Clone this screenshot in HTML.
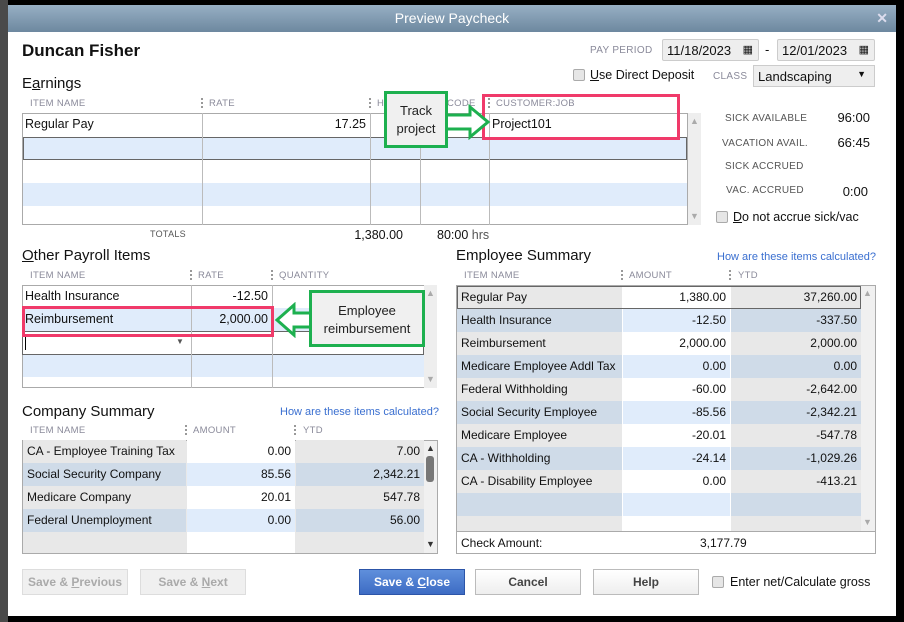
<!DOCTYPE html>
<html><head><meta charset="utf-8"><style>
*{box-sizing:border-box;margin:0;padding:0}
body{width:904px;height:622px;background:#000;position:relative;overflow:hidden;font-family:"Liberation Sans",Arial,sans-serif;font-size:12px;color:#111}
.a{position:absolute}
#win{position:absolute;left:8px;top:5px;width:888px;height:611px;background:#fff}
#tb{position:absolute;left:8px;top:5px;width:888px;height:27px;background:linear-gradient(#97afc4,#6d889f);color:#fff;font-size:14px;text-align:center;line-height:27px}
.hd{position:absolute;font-size:9.5px;color:#8a8a9a;letter-spacing:.3px}
.sep{position:absolute;width:2px;height:10px;border-left:2px dotted #999}
.box{position:absolute;border:1px solid #aaa;background:#fff}
.r{position:absolute;text-align:right}
.t{position:absolute;white-space:nowrap}
.cb{position:absolute;width:12px;height:12px;border:1px solid #aaa;background:#e6e6e6;border-radius:2px}
.btn{position:absolute;height:26px;border:1px solid #bbb;background:linear-gradient(#fff,#eee);text-align:center;line-height:24px;font-size:12px;font-weight:bold;color:#444}
.dis{color:#aaa;background:#f0f0f0;border-color:#ddd}
.sb{position:absolute;background:#eee}
.lnk{position:absolute;color:#3a6fd0;font-size:11px}
.cell{position:absolute;height:23px;line-height:23px;padding:0 4px;overflow:hidden;white-space:nowrap}
</style></head><body>
<div class="a" style="left:0;top:0;width:8px;height:622px;background:#4a4a4a"></div>
<div id="win"></div>
<div id="tb">Preview Paycheck<span class="a" style="right:8px;top:0;font-size:14px;font-weight:bold;color:#dde">✕</span></div>

<div class="t" style="left:22px;top:41px;font-size:17px;font-weight:bold">Duncan Fisher</div>
<div class="hd" style="left:590px;top:45px;font-size:10px">PAY PERIOD</div>
<div class="a" style="left:662px;top:39px;width:97px;height:22px;border:1px solid #ccc;background:#eee;border-radius:2px;padding:3px 4px;font-size:13px">11/18/2023<span class="a" style="right:5px;top:3px;font-size:11px">▦</span></div>
<div class="t" style="left:765px;top:42px;font-size:13px">-</div>
<div class="a" style="left:777px;top:39px;width:98px;height:22px;border:1px solid #ccc;background:#eee;border-radius:2px;padding:3px 4px;font-size:13px">12/01/2023<span class="a" style="right:5px;top:3px;font-size:11px">▦</span></div>
<div class="cb" style="left:573px;top:69px"></div>
<div class="t" style="left:590px;top:68px;font-size:12.5px"><u>U</u>se Direct Deposit</div>
<div class="hd" style="left:713px;top:71px;font-size:10px">CLASS</div>
<div class="a" style="left:753px;top:65px;width:122px;height:22px;border:1px solid #ccc;background:#eee;padding:3px 4px;font-size:13px">Landscaping<span class="a" style="right:8px;top:3px;font-size:9px">▼</span></div>

<div class="t" style="left:22px;top:75px;font-size:15px">E<u>a</u>rnings</div>
<div class="hd" style="left:30px;top:98px">ITEM NAME</div>
<div class="sep" style="left:201px;top:98px"></div><div class="hd" style="left:209px;top:98px">RATE</div>
<div class="sep" style="left:369px;top:98px"></div><div class="hd" style="left:377px;top:98px">H</div>
<div class="hd" style="left:447px;top:98px">CODE</div>
<div class="sep" style="left:488px;top:98px"></div><div class="hd" style="left:496px;top:98px">CUSTOMER:JOB</div>
<div class="box" style="left:22px;top:113px;width:666px;height:112px"></div>
<div class="a" style="left:23px;top:137px;width:664px;height:23px;background:#e0ecfb;border:1px solid #666"></div>
<div class="a" style="left:23px;top:183px;width:664px;height:23px;background:#e0ecfb"></div>
<div class="a" style="left:202px;top:113px;width:1px;height:112px;background:#bbb"></div>
<div class="a" style="left:370px;top:113px;width:1px;height:112px;background:#bbb"></div>
<div class="a" style="left:420px;top:113px;width:1px;height:112px;background:#bbb"></div>
<div class="a" style="left:489px;top:113px;width:1px;height:112px;background:#bbb"></div>
<div class="sb" style="left:688px;top:113px;width:13px;height:112px"></div>
<div class="t" style="left:690px;top:116px;font-size:9px;color:#aaa">▲</div>
<div class="t" style="left:690px;top:211px;font-size:9px;color:#aaa">▼</div>
<div class="t" style="left:25px;top:117px;font-size:12.5px">Regular Pay</div>
<div class="r" style="left:300px;width:66px;top:117px;font-size:12.5px">17.25</div>
<div class="t" style="left:492px;top:117px;font-size:12.5px">Project101</div>
<div class="a" style="left:482px;top:94px;width:198px;height:46px;border:3px solid #f03a6a"></div>
<svg class="a" style="left:440px;top:104px" width="52" height="36"><path d="M2 11 H30 V3 L48 18 L30 33 V25 H2 Z" fill="#fff" stroke="#1db04f" stroke-width="3"/></svg>
<div class="a" style="left:384px;top:91px;width:64px;height:57px;border:3px solid #1db04f;background:#f0f0f0;text-align:center;font-size:13px;line-height:18px;padding-top:8px;color:#222">Track<br>project</div>
<div class="hd" style="left:150px;top:229px;font-size:9px;color:#555">TOTALS</div>
<div class="r" style="left:320px;width:83px;top:228px;font-size:12.5px">1,380.00</div>
<div class="t" style="left:437px;top:228px;font-size:12.5px">80:00 <span style="color:#555">hrs</span></div>

<div class="hd" style="left:725px;top:113px;font-size:10px;color:#555">SICK AVAILABLE</div><div class="r" style="left:820px;width:50px;top:110px;font-size:13px">96:00</div>
<div class="hd" style="left:722px;top:138px;font-size:10px;color:#555">VACATION AVAIL.</div><div class="r" style="left:820px;width:50px;top:135px;font-size:13px">66:45</div>
<div class="hd" style="left:725px;top:161px;font-size:10px;color:#555">SICK ACCRUED</div>
<div class="hd" style="left:726px;top:185px;font-size:10px;color:#555">VAC. ACCRUED</div><div class="r" style="left:820px;width:48px;top:184px;font-size:13px">0:00</div>
<div class="cb" style="left:716px;top:211px"></div>
<div class="t" style="left:733px;top:210px;font-size:12.5px"><u>D</u>o not accrue sick/vac</div>

<div class="t" style="left:22px;top:247px;font-size:15px"><u>O</u>ther Payroll Items</div>
<div class="hd" style="left:30px;top:270px">ITEM NAME</div>
<div class="sep" style="left:190px;top:270px"></div><div class="hd" style="left:198px;top:270px">RATE</div>
<div class="sep" style="left:271px;top:270px"></div><div class="hd" style="left:279px;top:270px">QUANTITY</div>
<div class="box" style="left:22px;top:285px;width:403px;height:103px"></div>
<div class="a" style="left:23px;top:308px;width:401px;height:23px;background:#e0ecfb"></div>
<div class="a" style="left:23px;top:354px;width:401px;height:23px;background:#e0ecfb"></div>
<div class="a" style="left:22px;top:331px;width:402px;height:24px;border:1px solid #666;background:#fff"></div>
<div class="a" style="left:191px;top:285px;width:1px;height:103px;background:#bbb"></div>
<div class="a" style="left:272px;top:285px;width:1px;height:103px;background:#bbb"></div>
<div class="a" style="left:25px;top:335px;width:1px;height:15px;background:#000"></div>
<div class="t" style="left:176px;top:337px;font-size:8px;color:#555">▼</div>
<div class="sb" style="left:424px;top:285px;width:13px;height:103px"></div>
<div class="t" style="left:426px;top:288px;font-size:9px;color:#aaa">▲</div>
<div class="t" style="left:426px;top:374px;font-size:9px;color:#aaa">▼</div>
<div class="t" style="left:25px;top:289px;font-size:12.5px">Health Insurance</div>
<div class="r" style="left:200px;width:68px;top:289px;font-size:12.5px">-12.50</div>
<div class="t" style="left:25px;top:312px;font-size:12.5px">Reimbursement</div>
<div class="r" style="left:200px;width:68px;top:312px;font-size:12.5px">2,000.00</div>
<div class="a" style="left:22px;top:306px;width:252px;height:31px;border:3px solid #f03a6a"></div>
<svg class="a" style="left:274px;top:302px" width="42" height="36"><path d="M40 11 H20 V3 L3 18 L20 33 V25 H40 Z" fill="#fff" stroke="#1db04f" stroke-width="3"/></svg>
<div class="a" style="left:309px;top:290px;width:116px;height:57px;border:3px solid #1db04f;background:#f0f0f0;text-align:center;font-size:13px;line-height:18px;padding-top:9px;color:#222">Employee<br>reimbursement</div>

<div class="t" style="left:22px;top:403px;font-size:15px">Company Summary</div>
<div class="lnk" style="left:280px;top:406px">How are these items calculated?</div>
<div class="hd" style="left:30px;top:425px">ITEM NAME</div>
<div class="sep" style="left:185px;top:425px"></div><div class="hd" style="left:193px;top:425px">AMOUNT</div>
<div class="sep" style="left:294px;top:425px"></div><div class="hd" style="left:303px;top:425px">YTD</div>
<div class="box" style="left:22px;top:440px;width:416px;height:114px;background:#e8e8e8"></div>
<div class="a" style="left:23px;top:440px;width:401px;height:113px">
 <div class="cell" style="left:0;top:0;width:163px;background:#e8e8e8">CA - Employee Training Tax</div><div class="cell" style="left:164px;top:0;width:108px;background:#fff;text-align:right">0.00</div><div class="cell" style="left:273px;top:0;width:128px;background:#e8e8e8;text-align:right">7.00</div>
 <div class="cell" style="left:0;top:23px;width:163px;background:#cfdbe8">Social Security Company</div><div class="cell" style="left:164px;top:23px;width:108px;background:#e0ecfb;text-align:right">85.56</div><div class="cell" style="left:273px;top:23px;width:128px;background:#cfdbe8;text-align:right">2,342.21</div>
 <div class="cell" style="left:0;top:46px;width:163px;background:#e8e8e8">Medicare Company</div><div class="cell" style="left:164px;top:46px;width:108px;background:#fff;text-align:right">20.01</div><div class="cell" style="left:273px;top:46px;width:128px;background:#e8e8e8;text-align:right">547.78</div>
 <div class="cell" style="left:0;top:69px;width:163px;background:#cfdbe8">Federal Unemployment</div><div class="cell" style="left:164px;top:69px;width:108px;background:#e0ecfb;text-align:right">0.00</div><div class="cell" style="left:273px;top:69px;width:128px;background:#cfdbe8;text-align:right">56.00</div>
 <div class="cell" style="left:0;top:92px;width:163px;height:21px;background:#e8e8e8"></div><div class="cell" style="left:164px;top:92px;width:108px;height:21px;background:#fff"></div><div class="cell" style="left:273px;top:92px;width:128px;height:21px;background:#e8e8e8"></div>
</div>
<div class="sb" style="left:424px;top:441px;width:13px;height:112px;background:#f0f0f0"></div>
<div class="t" style="left:426px;top:443px;font-size:9px;color:#333">▲</div>
<div class="a" style="left:426px;top:456px;width:8px;height:26px;background:#777;border-radius:3px"></div>
<div class="t" style="left:426px;top:539px;font-size:9px;color:#333">▼</div>

<div class="t" style="left:456px;top:247px;font-size:15px">Employee Summary</div>
<div class="lnk" style="left:717px;top:251px">How are these items calculated?</div>
<div class="hd" style="left:464px;top:270px">ITEM NAME</div>
<div class="sep" style="left:621px;top:270px"></div><div class="hd" style="left:629px;top:270px">AMOUNT</div>
<div class="sep" style="left:729px;top:270px"></div><div class="hd" style="left:738px;top:270px">YTD</div>
<div class="box" style="left:456px;top:285px;width:420px;height:269px;background:#fff"></div>
<div class="a" style="left:457px;top:286px;width:404px;height:245px" id="es">
</div>
<div class="sb" style="left:861px;top:286px;width:14px;height:245px;background:#f0f0f0"></div>
<div class="t" style="left:863px;top:288px;font-size:9px;color:#aaa">▲</div>
<div class="t" style="left:863px;top:517px;font-size:9px;color:#aaa">▼</div>
<div class="a" style="left:457px;top:531px;width:418px;height:1px;background:#aaa"></div>
<div class="t" style="left:461px;top:536px;font-size:12px">Check Amount:</div>
<div class="t" style="left:700px;top:536px;font-size:12px">3,177.79</div>

<div class="btn dis" style="left:22px;top:569px;width:106px">Save &amp; <u>P</u>revious</div>
<div class="btn dis" style="left:140px;top:569px;width:106px">Save &amp; <u>N</u>ext</div>
<div class="btn" style="left:359px;top:569px;width:106px;background:linear-gradient(#5f8fdc,#3d6cc4);color:#fff;border-color:#2c55a8">Save &amp; <u>C</u>lose</div>
<div class="btn" style="left:475px;top:569px;width:106px">Cancel</div>
<div class="btn" style="left:593px;top:569px;width:106px">Help</div>
<div class="cb" style="left:712px;top:576px"></div>
<div class="t" style="left:730px;top:575px;font-size:12.5px">Enter net/Calculate <u>g</u>ross</div>
<script>
var d=[["Regular Pay","1,380.00","37,260.00"],["Health Insurance","-12.50","-337.50"],["Reimbursement","2,000.00","2,000.00"],["Medicare Employee Addl Tax","0.00","0.00"],["Federal Withholding","-60.00","-2,642.00"],["Social Security Employee","-85.56","-2,342.21"],["Medicare Employee","-20.01","-547.78"],["CA - Withholding","-24.14","-1,029.26"],["CA - Disability Employee","0.00","-413.21"],["","",""],["","",""]];
var h="";d.forEach(function(r,i){var y=i*23,o=i%2==1,g=o?"#cfdbe8":"#e8e8e8",w=o?"#e0ecfb":"#fff",hh=i==10?16:23;
h+='<div class="cell" style="left:0;top:'+y+'px;height:'+hh+'px;width:165px;background:'+g+'">'+r[0]+'</div><div class="cell" style="left:166px;top:'+y+'px;height:'+hh+'px;width:107px;background:'+w+';text-align:right">'+r[1]+'</div><div class="cell" style="left:274px;top:'+y+'px;height:'+hh+'px;width:130px;background:'+g+';text-align:right">'+r[2]+'</div>';});
h+='<div class="a" style="left:0;top:0;width:404px;height:23px;border:1px solid #666"></div>';
document.getElementById("es").innerHTML=h;
</script>
</body></html>
